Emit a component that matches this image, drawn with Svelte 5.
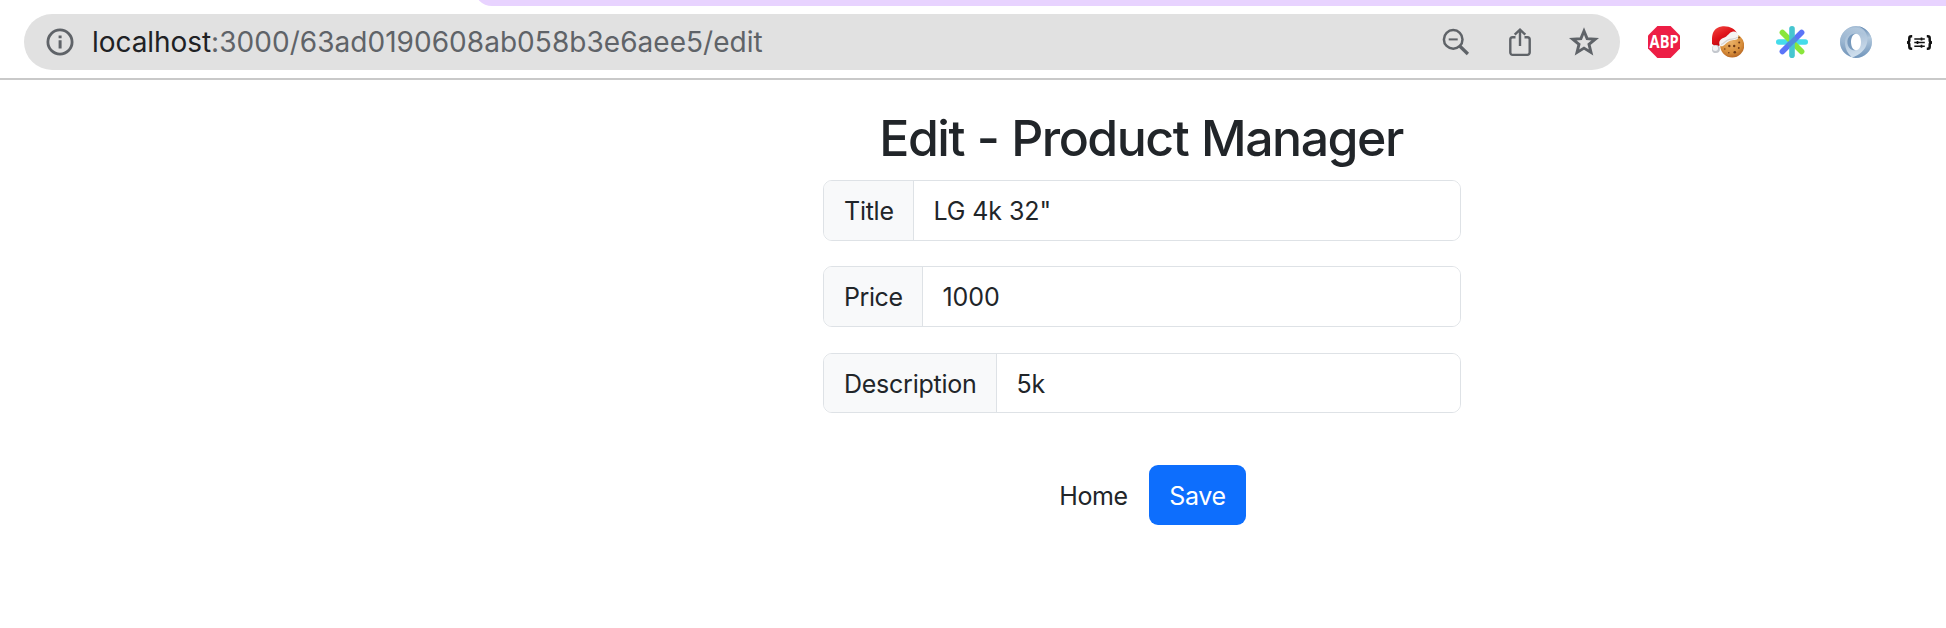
<script>
  const fields = $state([
    { id: 'title', label: 'Title', value: 'LG 4k 32"' },
    { id: 'price', label: 'Price', value: '1000' },
    { id: 'description', label: 'Description', value: '5k' }
  ]);
</script>

<div class="browser">
  <div class="tabs"><div class="group"></div></div>
  <header class="toolbar">
    <div class="omnibox">
      <svg class="info" width="28" height="28" viewBox="0 0 28 28">
        <circle cx="14" cy="14" r="12.1" fill="none" stroke="#5f6368" stroke-width="2.8" />
        <path d="M12.6 7.4h3v2.9h-3zM12.6 12.3h3v8.2h-3z" fill="#5f6368" />
      </svg>
      <div class="url"><span>localhost</span>:3000/63ad0190608ab058b3e6aee5/edit</div>
      <div class="actions">
        <svg width="32" height="32" viewBox="0 0 32 32" fill="none" stroke="#5f6368">
          <circle cx="13.2" cy="13.4" r="9.3" stroke-width="2.5" />
          <path d="M8.7 13.4h9" stroke-width="2" />
          <path d="M19.7 20l8.2 8" stroke-width="3.3" />
        </svg>
        <svg width="32" height="32" viewBox="0 0 32 32" fill="none" stroke="#5f6368" stroke-width="2.4">
          <path d="M11.5 11.3H8.6a2.3 2.3 0 0 0-2.3 2.3v13a2.3 2.3 0 0 0 2.3 2.3h14.8a2.3 2.3 0 0 0 2.3-2.3v-13a2.3 2.3 0 0 0-2.3-2.3h-2.9" />
          <path d="M16 20V4.5M10.7 8.7L16 3.7l5.3 5" />
        </svg>
        <svg width="32" height="32" viewBox="0 0 32 32" fill="none" stroke="#5f6368" stroke-width="2.9">
          <path d="M16 5l3.1 7.6 8.2.6-6.3 5.2 2 8-7-4.3-7 4.3 2-8-6.3-5.2 8.2-.6z" />
        </svg>
      </div>
    </div>
    <div class="extensions">
      <svg class="badge" width="32" height="32" viewBox="0 0 32 32">
        <path d="M9.4 0h13.2L32 9.4v13.2L22.6 32H9.4L0 22.6V9.4z" fill="#ed1e45" />
        <text class="abp" x="1.6" y="21.9" textLength="29" lengthAdjust="spacingAndGlyphs">ABP</text>
      </svg>
      <svg width="32" height="32" viewBox="0 0 32 32">
        <defs>
          <radialGradient id="cookie" cx=".45" cy=".35" r=".65">
            <stop offset="0" stop-color="#e9b067" />
            <stop offset=".7" stop-color="#d88f3b" />
            <stop offset="1" stop-color="#b96824" />
          </radialGradient>
          <linearGradient id="hat" x2=".6" y2="1">
            <stop offset="0" stop-color="#f34b43" />
            <stop offset=".5" stop-color="#df1219" />
            <stop offset="1" stop-color="#a90710" />
          </linearGradient>
        </defs>
        <circle cx="20.2" cy="19.6" r="12" fill="url(#cookie)" />
        <g fill="#6b3816">
          <circle cx="17.3" cy="20" r="1.2" /><circle cx="22.2" cy="20" r="1.2" />
          <circle cx="27.2" cy="16.6" r="1" /><circle cx="26.8" cy="22" r=".9" />
          <circle cx="22.8" cy="26.2" r="1.3" /><circle cx="16.8" cy="26.8" r=".8" />
          <circle cx="12.8" cy="23" r=".8" /><circle cx="27" cy="11.5" r=".8" />
        </g>
        <path d="M0 18C-.5 8 1 2 9.5.4 17-.6 23 2.8 25 7.2L9.2 16.5 6 22z" fill="url(#hat)" />
        <path d="M7.5 18.7C6.5 14.8 9 12.6 12.4 11.5 15.6 10.5 17 6.4 21 5.6c4-.7 6.2 3 5 6.6-1.2 2.6-5.2 1.2-8 2.5-3.2 1.4-4.4 3.7-7 5.2-1.6.8-3 .2-3.5-1.2z" fill="#f5f4f3" />
        <path d="M9 18.5c3-.4 5.1-4.8 8.6-5.2 3.8-.5 5.9 0 8-2.1" fill="none" stroke="#d6d3d1" stroke-width="1.2" />
        <circle cx="3.9" cy="23.1" r="4" fill="#c3c7cd" />
        <circle cx="3.3" cy="22.2" r="2.7" fill="#f1f2f4" />
      </svg>
      <svg width="32" height="32" viewBox="0 0 32 32" fill="none" stroke-width="5.6" stroke-linecap="round">
        <path d="M2.8 16h26.4" stroke="#45dceb" />
        <path d="M6.4 6.4l19.2 19.2" stroke="#8ae63b" />
        <path d="M25.6 6.4L6.4 25.6" stroke="#5b74f8" />
        <path d="M16 2.8v26.4" stroke="#46c6d0" />
        <path d="M20 12l-8 8" stroke="#4f8dde" stroke-width="5" stroke-linecap="butt" />
      </svg>
      <svg width="32" height="32" viewBox="0 0 32 32">
        <defs>
          <linearGradient id="ringA" x1=".2" y1="0" x2=".5" y2="1">
            <stop offset="0" stop-color="#9db7d1" />
            <stop offset=".5" stop-color="#b4c9de" />
            <stop offset="1" stop-color="#d3e2ef" />
          </linearGradient>
          <linearGradient id="ringB" x1=".4" y1="0" x2=".5" y2="1">
            <stop offset="0" stop-color="#4a75a5" />
            <stop offset=".4" stop-color="#b3c9dd" />
            <stop offset="1" stop-color="#5d86b1" />
          </linearGradient>
          <linearGradient id="ringC" x1=".6" y1="0" x2=".4" y2="1">
            <stop offset="0" stop-color="#b9cde0" />
            <stop offset=".55" stop-color="#8fadcb" />
            <stop offset="1" stop-color="#44709f" />
          </linearGradient>
        </defs>
        <path fill-rule="evenodd" d="M16 0a16 16 0 1 0 0 32 16 16 0 0 0 0-32zm0 7.8c3.2 0 5 3.8 5 8.2s-1.8 8.2-5 8.2-5-3.8-5-8.2 1.8-8.2 5-8.2z" fill="url(#ringA)" />
        <path d="M16 7.8C9 5.5 4.5 11 5 18c.4 5 2.5 9 6.5 13C5 29 0 23 0 16 0 8 6 2 14 1.5 20 1.5 24 4 26 8.5 23 6.2 19 5.6 16 7.8z" fill="url(#ringC)" opacity=".65" />
        <path d="M18.5.2C25.5 3 28.5 9.5 27 17c-1.5 7-7.5 12.2-15 14.5C22 34 32 26 32 16 32 8 26 1.5 18.5.2z" fill="url(#ringB)" opacity=".85" />
        <path d="M16 7.8c-3.2 0-5 3.8-5 8.2s1.8 8.2 5 8.2c-4.5 1-8.6-3-8.6-8.2S11.5 6.8 16 7.8z" fill="#5d84ae" opacity=".7" />
      </svg>
      <svg width="32" height="32" viewBox="0 0 32 32" fill="none" stroke="#111" stroke-width="2.5">
        <path d="M8.2 10.2h-.9q-2 0-2 2v2.1q0 2-2.2 2.2 2.2.2 2.2 2.2v2.1q0 2 2 2h.9" />
        <path d="M22.8 10.2h.9q2 0 2 2v2.1q0 2 2.2 2.2-2.2.2-2.2 2.2v2.1q0 2-2 2h-.9" />
        <path d="M10.3 12.9h10.5M10.3 16.6h10.5M10.3 20.3h10.5" stroke-width="1.5" />
        <path d="M17.5 11.4v3M13.5 15.1v3M17.5 18.8v3" stroke-width="1.7" />
      </svg>
    </div>
  </header>

  <main>
    <h1>Edit - Product Manager</h1>
    <form onsubmit={(e) => e.preventDefault()}>
      {#each fields as field (field.id)}
        <div class="input-group">
          <label class={field.id} for={field.id}>{field.label}</label>
          <input id={field.id} type="text" bind:value={field.value} />
        </div>
      {/each}
      <div class="buttons">
        <button type="button" class="btn home">Home</button>
        <button type="submit" class="btn save">Save</button>
      </div>
    </form>
  </main>
</div>

<style>
  :global(body) { background: #fff; overflow: hidden; }
  .browser, .browser * { box-sizing: border-box; }
  .browser { width: 1946px; height: 628px; overflow: hidden; background: #fff; font-family: Inter, "Liberation Sans", sans-serif; color: #212529; }
  svg { display: block; flex: none; }
  .badge { overflow: visible; }
  .tabs { height: 6px; overflow: hidden; padding-left: 474px; }
  .group { height: 20px; margin-top: -14px; background: #e8d3ff; border-radius: 0 0 0 18px; }
  .toolbar { height: 74px; padding: 8px 0 0 24px; display: flex; align-items: flex-start; border-bottom: 2px solid #c9c9c9; }
  .omnibox { width: 1596px; height: 56px; border-radius: 28px; background: #e1e1e1; display: flex; align-items: center; padding: 0 20px 0 22px; }
  .url { margin-left: 18px; font-size: 28px; line-height: 34px; letter-spacing: 0.04px; color: #5f6368; white-space: nowrap; }
  .url span { color: #202124; letter-spacing: -0.06px; }
  .actions { display: flex; gap: 32px; margin-left: auto; }
  .extensions { display: flex; gap: 32px; margin: 12px 0 0 28px; }
  .abp { font: 700 17px "Open Sans", sans-serif; fill: #fff; }
  main { width: 638px; margin-left: 823px; padding-top: 28px; }
  h1 { margin: 0 0 12px; padding-right: 2px; text-align: center; font-size: 50px; line-height: 60px; font-weight: 500; letter-spacing: -1.5px; word-spacing: 1px; white-space: nowrap; }
  form { display: flex; flex-direction: column; }
  .input-group { display: flex; height: 61px; margin-bottom: 25px; border: 1px solid #dee2e6; border-radius: 9px; overflow: hidden; font-size: 25px; }
  .input-group:nth-child(2) { margin-bottom: 26px; }
  .input-group:nth-child(3) { height: 60px; margin-bottom: 52px; }
  label { flex: none; width: 90px; padding: 0 0 0 20px; line-height: 60px; background: #f8f9fa; border-right: 1px solid #dee2e6; letter-spacing: -0.25px; white-space: nowrap; }
  label.price { width: 99px; letter-spacing: -0.4px; }
  label.description { width: 173px; }
  input { flex: 1; min-width: 0; border: 0; outline: 0; padding: 1px 19px 0 19.5px; background: #fff; color: #212529; font: inherit; letter-spacing: -0.1px; }
  .buttons { display: flex; margin-left: 215px; }
  .btn { height: 60px; border: 0; padding: 2px 0 0; font: inherit; font-size: 25px; letter-spacing: -0.35px; border-radius: 9px; background: none; color: #212529; text-align: center; }
  .home { width: 111px; }
  .save { width: 97px; background: #0d6efd; color: #fff; }
</style>
